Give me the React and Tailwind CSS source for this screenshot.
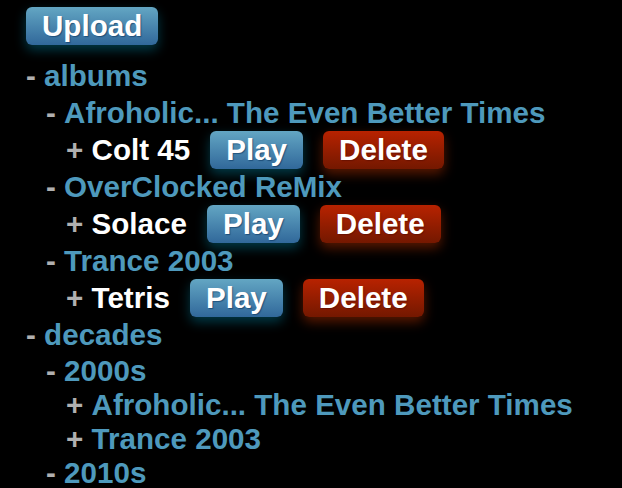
import React from "react";

const blueBtn =
  "inline-flex items-center h-[38px] px-[16px] rounded-[6px] text-white bg-linear-to-b from-[#63a6c3] to-[#31689a] shadow-[0_5px_12px_rgba(0,210,255,0.28)] [text-shadow:1px_1px_1px_rgba(0,40,80,0.5)]";
const redBtn =
  "inline-flex items-center h-[38px] px-[16px] rounded-[6px] text-white bg-linear-to-b from-[#b82200] to-[#741800] shadow-[0_5px_12px_rgba(255,70,0,0.35)] [text-shadow:1px_1px_1px_rgba(80,10,0,0.5)]";

function Row({ indent, sign, children, h = "h-[37px]" }) {
  return (
    <div className={`flex items-center ${h}`} style={{ paddingLeft: indent }}>
      <span className="text-[#b0b0b0]">{sign}&nbsp;</span>
      {children}
    </div>
  );
}

function Folder({ indent, sign, name, h }) {
  return (
    <Row indent={indent} sign={sign} h={h}>
      <span className="text-[#4e99bc]">{name}</span>
    </Row>
  );
}

function Track({ name }) {
  return (
    <Row indent={40} sign="+">
      <span className="text-white">{name}</span>
      <button className={`${blueBtn} ml-[20px]`}>Play</button>
      <button className={`${redBtn} ml-[20px]`}>Delete</button>
    </Row>
  );
}

export default function App() {
  return (
    <div className="bg-black w-[622px] h-[488px] overflow-hidden pl-[26px] pt-[7px] font-['Liberation_Sans',Arial,sans-serif] font-bold text-[29.6px] leading-[34px]">
      <div className="h-[37px] flex">
        <button className={`${blueBtn} h-[37px]`}>Upload</button>
      </div>
      <div className="mt-[13px] flex flex-col">
        <Folder indent={0} sign="-" name="albums" />
        <Folder indent={20} sign="-" name="Afroholic... The Even Better Times" />
        <Track name="Colt 45" />
        <Folder indent={20} sign="-" name="OverClocked ReMix" />
        <Track name="Solace" />
        <Folder indent={20} sign="-" name="Trance 2003" />
        <Track name="Tetris" />
        <Folder indent={0} sign="-" name="decades" h="h-[37px]" />
        <Folder indent={20} sign="-" name="2000s" h="h-[35px]" />
        <Folder indent={40} sign="+" name="Afroholic... The Even Better Times" h="h-[34px]" />
        <Folder indent={40} sign="+" name="Trance 2003" h="h-[34px]" />
        <Folder indent={20} sign="-" name="2010s" h="h-[34px]" />
      </div>
    </div>
  );
}
